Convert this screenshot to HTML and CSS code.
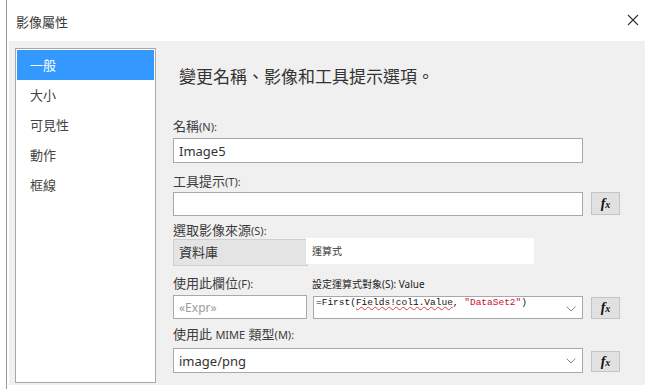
FILE: index.html
```html
<!DOCTYPE html>
<html lang="zh-Hant">
<head>
    <meta charset="UTF-8">
    <title>影像屬性</title>
    <link rel="stylesheet" href="styles.css">
</head>
<body>
    <div class="window">
        <!-- Barre de titre -->
        <div class="titlebar">
            <span class="title">影像屬性</span>
            <svg class="close" width="12" height="12" viewBox="0 0 12 12">
                <path d="M1 1 L11 11 M11 1 L1 11" stroke="#333" stroke-width="1.1" fill="none"/>
            </svg>
        </div>

        <div class="panel">
            <!-- Liste des pages -->
            <ul class="nav">
                <li class="active">一般</li>
                <li>大小</li>
                <li>可見性</li>
                <li>動作</li>
                <li>框線</li>
            </ul>

            <!-- Contenu de la page "一般" -->
            <div class="content">
                <h1 class="heading">變更名稱、影像和工具提示選項。</h1>

                <label class="lbl lbl-name">名稱<span class="key">(N):</span></label>
                <div class="box box-name">Image5</div>

                <label class="lbl lbl-tip">工具提示<span class="key">(T):</span></label>
                <div class="row row-tip">
                    <div class="box box-wide"></div>
                    <button class="fx"><i>f</i><i class="x">x</i></button>
                </div>

                <label class="lbl lbl-src">選取影像來源<span class="key">(S):</span></label>
                <div class="row row-src">
                    <div class="source">資料庫</div>
                    <div class="paste">運算式</div>
                </div>

                <div class="row row-lbl">
                    <label class="lbl lbl-field">使用此欄位<span class="key">(F):</span></label>
                    <span class="small">設定運算式對象(S): Value</span>
                </div>
                <div class="row row-field">
                    <div class="box box-expr">«Expr»</div>
                    <div class="combo combo-expr">
                        <span class="code">=First(<span class="squiggle">Fields!col1.Value</span>, <span class="str">"DataSet2"</span>)</span>
                        <svg class="chev" width="10" height="6" viewBox="0 0 10 6"><path d="M0.5 0.5 L5 5 L9.5 0.5" stroke="#888" fill="none"/></svg>
                    </div>
                    <button class="fx fx-low"><i>f</i><i class="x">x</i></button>
                </div>

                <label class="lbl lbl-mime">使用此 <span class="latin">MIME</span> 類型<span class="key">(M):</span></label>
                <div class="row row-mime">
                    <div class="combo combo-wide">
                        <span>image/png</span>
                        <svg class="chev" width="10" height="6" viewBox="0 0 10 6"><path d="M0.5 0.5 L5 5 L9.5 0.5" stroke="#888" fill="none"/></svg>
                    </div>
                    <button class="fx fx-mime"><i>f</i><i class="x">x</i></button>
                </div>
            </div>
        </div>
    </div>
</body>
</html>
```

FILE: styles.css
```css
body {
    margin: 0;
    background: #ffffff;
    font-family: "Noto Sans", "Noto Sans CJK TC", sans-serif;
    color: #333;
}

.window {
    margin-left: 6px;
    border-left: 1px solid #9a9a9a;
    height: 389px;
    box-sizing: border-box;
}

/* Barre de titre */
.titlebar {
    height: 41px;
    display: flex;
    align-items: center;
    justify-content: space-between;
    padding: 2px 22px 0 9px;
    box-sizing: border-box;
}

.title {
    font-size: 13px;
    color: #3a3a3a;
}

.close {
    margin-top: -3px;
}

/* Panneau gris */
.panel {
    margin-left: 2px;
    width: 636px;
    height: 344px;
    background: #f0f0f0;
    display: flex;
    padding: 7px 0 2px 6px;
    box-sizing: border-box;
}

.nav {
    list-style: none;
    margin: 0;
    padding: 1px;
    width: 141px;
    height: 335px;
    box-sizing: border-box;
    background: #fff;
    border: 1px solid #a8a8a8;
}

.nav li {
    height: 30px;
    line-height: 30px;
    padding-left: 13px;
    font-size: 13px;
    color: #444;
}

.nav li.active {
    background: #3399ff;
    color: #fff;
}

.content {
    margin-left: 17px;
    display: flex;
    flex-direction: column;
    width: 448px;
}

.heading {
    margin: 18px 0 0 6px;
    font-size: 17px;
    font-weight: normal;
    line-height: 22px;
    color: #333;
}

.lbl {
    display: block;
    font-size: 13px;
    line-height: 14px;
    color: #3c3c3c;
}

.key, .latin {
    font-size: 11px;
}

.lbl-name { margin-top: 31px; }
.lbl-tip { margin-top: 11px; }
.lbl-src { margin-top: 7px; }
.lbl-mime { margin-top: 8px; }

.row {
    display: flex;
}

/* Champs */
.box, .combo {
    background: #fff;
    border: 1px solid #a8a8a8;
    box-sizing: border-box;
    font-size: 13px;
    color: #333;
    display: flex;
    align-items: center;
    padding-left: 5px;
}

.box-name {
    margin-top: 4px;
    width: 410px;
    height: 25px;
}

.row-tip {
    margin-top: 3px;
    height: 24px;
}

.box-wide {
    width: 410px;
}

.fx {
    margin-left: 8px;
    width: 29px;
    height: 23px;
    background: #e1e1e1;
    border: 1px solid #c4c4c4;
    font-family: "Liberation Serif", serif;
    font-weight: bold;
    font-size: 14px;
    color: #111;
    padding: 0;
}

.fx .x {
    font-size: 10px;
}

.row-src {
    height: 28px;
}

.source {
    margin-top: 1px;
    width: 135px;
    height: 27px;
    background: #e4e4e4;
    border: 1px solid #cfcfcf;
    box-sizing: border-box;
    font-size: 13px;
    line-height: 25px;
    padding-left: 5px;
    color: #333;
}

.paste {
    margin-left: -2px;
    width: 228px;
    height: 26px;
    background: #fff;
    font-size: 10px;
    line-height: 26px;
    padding-left: 6px;
    box-sizing: border-box;
    color: #333;
}

.row-lbl {
    margin-top: 10px;
    align-items: center;
    height: 14px;
}

.lbl-field {
    width: 139px;
}

.small {
    font-size: 10px;
    color: #222;
}

.row-field {
    margin-top: 5px;
    height: 24px;
}

.box-expr {
    width: 134px;
    height: 24px;
    color: #9a9a9a;
    font-size: 12px;
}

.combo {
    justify-content: space-between;
    padding-right: 6px;
}

.combo-expr {
    margin: 1px 0 0 6px;
    width: 270px;
    height: 23px;
    align-items: flex-start;
    padding-left: 2px;
}

.code {
    font-family: "Liberation Mono", monospace;
    font-size: 9.5px;
    line-height: 12px;
    color: #111;
}

.squiggle {
    text-decoration: underline wavy #e04040;
    text-decoration-thickness: 1px;
}

.str {
    color: #c8102e;
}

.combo-expr .chev {
    margin-top: 9px;
}

.fx-low {
    margin-top: 2px;
    height: 22px;
}

.row-mime {
    margin-top: 6px;
    height: 25px;
}

.combo-wide {
    width: 410px;
    height: 25px;
}

.fx-mime {
    margin-top: 3px;
    height: 21px;
}
```
